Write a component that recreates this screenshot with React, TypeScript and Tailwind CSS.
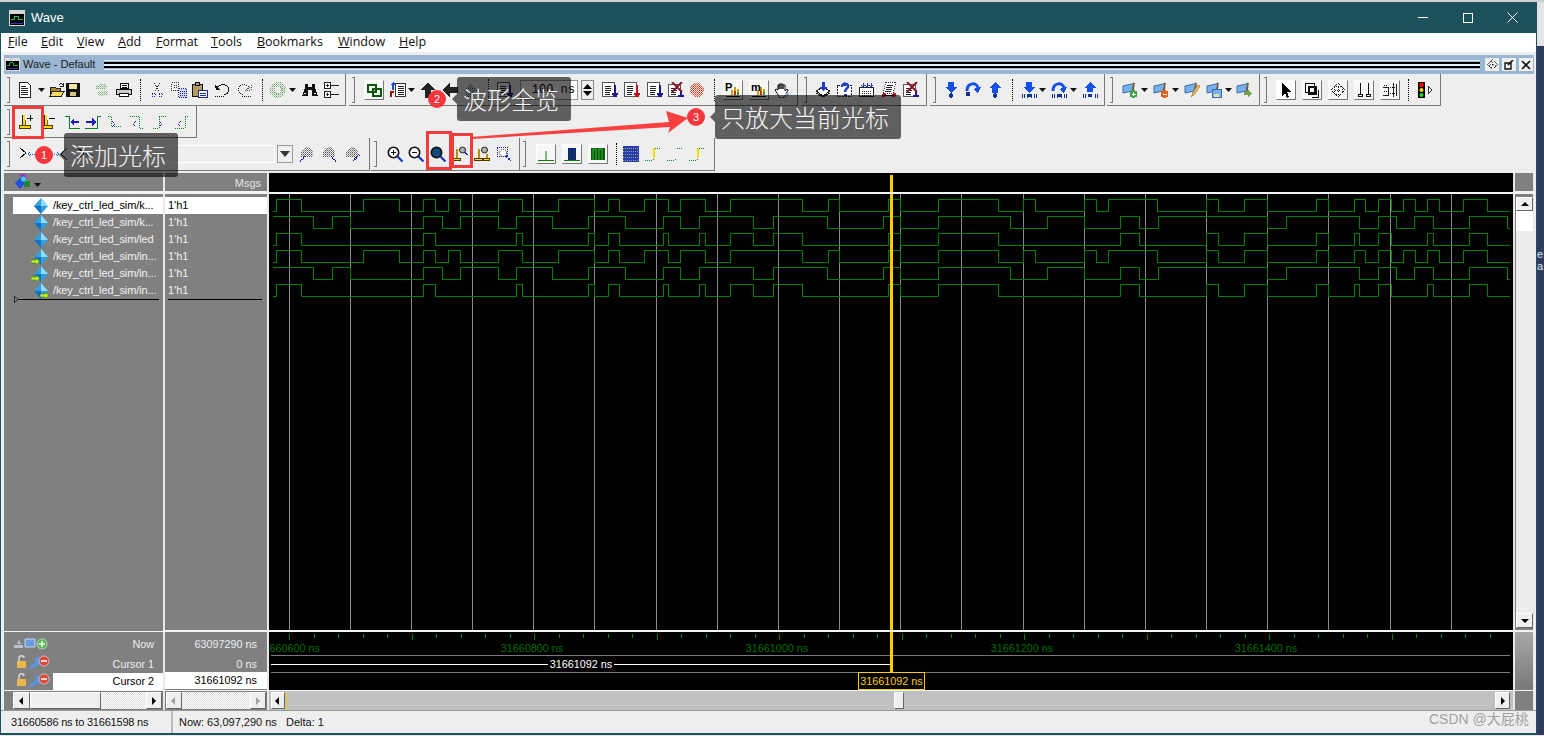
import type { ReactNode } from "react";

type IconProps = { c?: string };

const Ico = ({ c = "", children }: { c?: string; children: ReactNode }) => (
  <svg viewBox="0 0 16 16" fill="none" shapeRendering="crispEdges" className={`w-4 h-4 shrink-0 ${c}`}>
    {children}
  </svg>
);

// dither fills shared by the greyed out icons
const Patterns = () => (
  <svg className="absolute w-0 h-0">
    <defs>
      <pattern id="dithGrey" width="2" height="2" patternUnits="userSpaceOnUse">
        <rect width="1" height="1" fill="#555" />
        <rect x="1" y="1" width="1" height="1" fill="#999" />
      </pattern>
      <pattern id="dithGreen" width="2" height="2" patternUnits="userSpaceOnUse">
        <rect width="1" height="1" fill="#6fa56f" />
        <rect x="1" y="1" width="1" height="1" fill="#b5d0b5" />
      </pattern>
      <pattern id="dithRed" width="2" height="2" patternUnits="userSpaceOnUse">
        <rect width="1" height="1" fill="#d0301a" />
        <rect x="1" y="1" width="1" height="1" fill="#e86a50" />
      </pattern>
    </defs>
  </svg>
);

// main toolbar icons
const Doc = ({ c }: IconProps) => (
  <Ico c={c}>
    <path d="M2.5 .5h8l3 3v12h-11z" fill="#fff" stroke="#222" />
    <path d="M4 4h5M4 6h7M4 8h7M4 10h7M4 12h7" stroke="#222" />
  </Ico>
);
const Open = ({ c }: IconProps) => (
  <Ico c={c}>
    <path d="M1.5 5.5h5l1 1h4v8h-10z" fill="#b08a20" stroke="#222" />
    <path d="M3 9.5h12l-3 5H1z" fill="#ffd966" stroke="#222" />
    <path d="M10 3c1-2 3-2 4 0" stroke="#222" />
    <path d="M14 1v3h-3" stroke="#222" />
  </Ico>
);
const Save = ({ c }: IconProps) => (
  <Ico c={c}>
    <path d="M1.5 1.5h13v13h-13z" fill="#111" stroke="#111" />
    <path d="M4 2h8v5H4z" fill="#eee3a0" />
    <path d="M5 10h6v4H5z" fill="#d9c87a" />
  </Ico>
);
const Refresh = ({ c }: IconProps) => (
  <Ico c={c}>
    <path d="M1 7c1-6 10-7 13-2l-3 2H1zM15 9c-1 6-10 7-13 2l3-2h10z" fill="url(#dithGreen)" />
  </Ico>
);
const Print = ({ c }: IconProps) => (
  <Ico c={c}>
    <path d="M4.5 1.5h8v5h-8z" fill="#fff" stroke="#111" />
    <path d="M.5 7.5h15v5H.5z" fill="#ccc" stroke="#111" />
    <path d="M3.5 11.5h9v3h-9z" fill="#fff" stroke="#111" />
    <path d="M6 3h5M6 5h5" stroke="#111" />
  </Ico>
);
const Cut = ({ c }: IconProps) => (
  <Ico c={c}>
    <path d="M5 1l5 9M11 1l-5 9" stroke="#223" strokeDasharray="1 1" />
    <path d="M3 11h3v3H3zM10 11h3v3h-3z" stroke="#2222cc" strokeDasharray="1 1" />
  </Ico>
);
const Copy = ({ c }: IconProps) => (
  <Ico c={c}>
    <path d="M.5 .5h7v8h-7z" stroke="#333" strokeDasharray="1 1" />
    <path d="M7.5 6.5h8v9h-8z" fill="#c9d4f0" stroke="#2222aa" strokeDasharray="1 1" />
    <path d="M3 3h3M3 5h3M9 9h5M9 11h5M9 13h5" stroke="#334" strokeDasharray="1 1" />
  </Ico>
);
const Paste = ({ c }: IconProps) => (
  <Ico c={c}>
    <path d="M.5 2.5h10v12H.5z" fill="#b09a60" stroke="#111" />
    <path d="M3.5 .5h4v3h-4z" fill="#999" stroke="#111" />
    <path d="M6.5 8.5h9v7h-9z" fill="#fff" stroke="#1a2a9a" />
    <path d="M8 11h6M8 13h6" stroke="#1a2a9a" />
  </Ico>
);
const Undo = ({ c }: IconProps) => (
  <Ico c={c}>
    <path d="M2 6c3-5 11-4 12 1 0 3-2 5-5 6" stroke="#111" />
    <path d="M0 3l1 5h5z" fill="#111" />
    <path d="M0 14h10" stroke="#111" strokeDasharray="1 1" />
  </Ico>
);
const Redo = ({ c }: IconProps) => (
  <Ico c={c}>
    <path d="M14 6C11 1 3 2 2 7c0 3 2 5 5 6" stroke="#222" strokeDasharray="1 1" />
    <path d="M16 3l-1 5h-5z" stroke="#555" strokeDasharray="1 1" />
    <path d="M6 14h10" stroke="#222" strokeDasharray="1 1" />
  </Ico>
);
const Ring = ({ c }: IconProps) => (
  <Ico c={c}>
    <circle cx="8" cy="8" r="8" fill="url(#dithGreen)" />
    <circle cx="8" cy="8" r="3.5" fill="#eeeeee" stroke="#999" strokeDasharray="1 1" />
  </Ico>
);
const Bino = ({ c }: IconProps) => (
  <Ico c={c}>
    <path d="M3 2h3v3h4V2h3v4l3 8H10V8H6v6H0l3-8z" fill="#111" />
    <path d="M2 11h2M12 11h2" stroke="#fff" />
  </Ico>
);
const TreeIc = ({ c }: IconProps) => (
  <Ico c={c}>
    <path d="M.5 .5h6v6h-6zM.5 9.5h6v6h-6z" fill="#fff" stroke="#222" />
    <path d="M2 3.5h3M3.5 2v3M2 12.5h3M3.5 11v3M7 3.5h8M7 12.5h8" stroke="#222" />
  </Ico>
);
const Link = ({ c }: IconProps) => (
  <Ico c={c}>
    <path d="M1.5 2.5h8v7h-8z" stroke="#0a5a0a" strokeWidth="2" />
    <path d="M6.5 6.5h8v7h-8z" stroke="#0a5a0a" strokeWidth="2" />
  </Ico>
);
const Flip = ({ c }: IconProps) => (
  <Ico c={c}>
    <path d="M5.5 1.5h10v13h-10z" fill="#fff" stroke="#333" />
    <path d="M8 4h6M8 6h6M8 8h6M8 10h6M8 12h6" stroke="#222" />
    <path d="M3 8V3" stroke="#1a4ad0" strokeWidth="2" />
    <path d="M3 0l3 3H0z" fill="#1a4ad0" />
    <path d="M1 15v-5h3" stroke="#a01010" strokeWidth="2" />
  </Ico>
);
const Up = ({ c }: IconProps) => (
  <Ico c={c}>
    <path d="M8 0l7 8h-4v8H5V8H1z" fill="#222" />
  </Ico>
);
const Back = ({ c }: IconProps) => (
  <Ico c={c}>
    <path d="M0 8l8-7v4h8v6H8v4z" fill="#222" />
  </Ico>
);
const Hatch = ({ c }: IconProps) => (
  <Ico c={c}>
    <path d="M8 1l7 8h-3v6H4V9H1z" fill="url(#dithGrey)" />
  </Ico>
);
const Zoomer = ({ c, mark = "#1a1a8a" }: IconProps & { mark?: string }) => (
  <Ico c={c}>
    <path d="M.5 .5h12v14H.5z" fill="#fff" stroke="#555" />
    <path d="M3 4h6M3 6h6M3 8h6M3 10h5M3 12h5" stroke="#222" />
    <path d="M13 3v9M10 12h6M11 14h4" stroke={mark} strokeWidth="1.5" />
  </Ico>
);
const RedX = ({ c }: IconProps) => (
  <Ico c={c}>
    <path d="M.5 2.5h12v12H.5z" fill="#fff" stroke="#555" />
    <path d="M3 6h6M3 8h6M3 10h5M3 12h5" stroke="#222" />
    <path d="M13 8v5M10 14h6" stroke="#1a1a8a" strokeWidth="1.5" />
    <path d="M4 0l10 10M14 0L4 10" stroke="#8a1a2a" strokeWidth="2" shapeRendering="auto" />
  </Ico>
);
const RedDot = ({ c }: IconProps) => (
  <Ico c={c}>
    <circle cx="8" cy="8" r="7" fill="url(#dithRed)" />
  </Ico>
);
const Bars = ({ l }: { l: string }) => (
  <Ico>
    <path d="M1 14.5h14" stroke="#111" />
    <path d="M7 13V8M10 13V5M13 13V7" stroke="#d0a000" strokeWidth="2" />
    <path d="M10 13V9" stroke="#c03010" strokeWidth="2" />
    <path d="M13 13v-3" stroke="#2a9a2a" strokeWidth="2" />
    <text x="0" y="9" fontSize="11" fontWeight="700" fill="#000" fontFamily="Liberation Sans">
      {l}
    </text>
  </Ico>
);
const Hand = ({ c }: IconProps) => (
  <Ico c={c}>
    <path d="M4 8V3h1v4-5h2v5-5h2v5-4h2v6l2-2 1 1-3 6-2 2H6L3 11 1 8l1-1z" fill="#fff" stroke="#111" shapeRendering="auto" />
    <path d="M8 15l6-5 1 2-4 4z" fill="#9fb4c8" />
  </Ico>
);
const Layers = ({ c }: IconProps) => (
  <Ico c={c}>
    <path d="M1 9l7-4 7 4-7 5z" fill="#fff" stroke="#222" />
    <path d="M1 11l7 4 7-4" stroke="#222" />
    <path d="M8 0v6" stroke="#1a3ad0" strokeWidth="3" />
    <path d="M4 5h8l-4 4z" fill="#1a3ad0" />
  </Ico>
);
const Question = ({ c }: IconProps) => (
  <Ico c={c}>
    <path d="M.5 3.5h14v11H.5z" fill="#fff" stroke="#222" strokeDasharray="2 1" />
    <path d="M5 5c0-5 7-4 6 0-1 2-3 2-3 5" stroke="#1a3ad0" strokeWidth="2.5" shapeRendering="auto" />
    <path d="M7 12h3v2H7z" fill="#1a3ad0" />
  </Ico>
);
const ListDown = ({ c }: IconProps) => (
  <Ico c={c}>
    <path d="M.5 5.5h14v9H.5z" fill="#fff" stroke="#222" />
    <path d="M3 9h9M3 11h9M3 13h9" stroke="#333" strokeDasharray="1 1" />
    <path d="M4 1v3M8 1v3M12 1v3M2 3l2 2 2-2M6 3l2 2 2-2M10 3l2 2 2-2" stroke="#1a3ad0" />
  </Ico>
);
const Scroll = ({ c }: IconProps) => (
  <Ico c={c}>
    <path d="M5 .5h10l-3 11H2z" fill="#fff" stroke="#333" strokeDasharray="1 1" />
    <path d="M6 3h6M5 5h6M5 7h6M4 9h6" stroke="#223" />
    <circle cx="3" cy="13" r="2" fill="#c01020" />
    <circle cx="13" cy="13" r="2" fill="#c01020" />
    <path d="M3 13h10" stroke="#111" />
  </Ico>
);
const Down2 = ({ c }: IconProps) => (
  <Ico c={c}>
    <path d="M5 0h6v5h3l-6 6-6-6h3z" fill="#1450e8" />
    <circle cx="8" cy="13.5" r="2.2" fill="#10309a" />
  </Ico>
);
const Over = ({ c }: IconProps) => (
  <Ico c={c}>
    <path d="M2 9c0-9 10-9 11-3" stroke="#1450e8" strokeWidth="3" shapeRendering="auto" />
    <path d="M16 5l-3 6-5-4z" fill="#1450e8" />
    <circle cx="3" cy="12" r="2.5" fill="#10309a" />
  </Ico>
);
const Up2 = ({ c }: IconProps) => (
  <Ico c={c}>
    <path d="M8 0l6 6h-3v5H5V6H2z" fill="#1450e8" />
    <circle cx="8" cy="13.5" r="2.2" fill="#10309a" />
  </Ico>
);
const BarsDown = ({ c, over = false }: IconProps & { over?: boolean }) => (
  <Ico c={c}>
    {over ? (
      <>
        <path d="M2 9c0-9 10-9 11-3" stroke="#1450e8" strokeWidth="3" shapeRendering="auto" />
        <path d="M16 5l-3 6-5-4z" fill="#1450e8" />
      </>
    ) : (
      <path d="M5 0h6v5h3l-6 6-6-6h3z" fill="#1450e8" />
    )}
    <path d="M1 12v4M3 12v4M6 12v4M10 12v4M13 12v4M15 12v4" stroke="#10309a" />
    <circle cx="8" cy="13.5" r="2" fill="#10309a" />
  </Ico>
);
const BarsUp = ({ c }: IconProps) => (
  <Ico c={c}>
    <path d="M8 0l6 6h-3v4H5V6H2z" fill="#1450e8" />
    <path d="M1 12v4M3 12v4M13 12v4M15 12v4" stroke="#10309a" />
    <circle cx="8" cy="13.5" r="2" fill="#10309a" />
  </Ico>
);
const Flag = ({ c, badge }: IconProps & { badge: ReactNode }) => (
  <Ico c={c}>
    <path d="M1 4l9-2 2-1-2 8-9 2z" fill="#7ab0e8" stroke="#3a6ab0" shapeRendering="auto" />
    <path d="M12 1l-1 9" stroke="#7a5a20" strokeWidth="1.5" shapeRendering="auto" />
    {badge}
  </Ico>
);
const Arrow = ({ c }: IconProps) => (
  <Ico c={c}>
    <path d="M4 1l9 9H9l2 5-2 1-2-5-3 3z" fill="#000" />
  </Ico>
);
const Squares = ({ c }: IconProps) => (
  <Ico c={c}>
    <path d="M1.5 1.5h9v9h-9z" stroke="#111" />
    <path d="M5 5h7v7H5z" stroke="#111" strokeWidth="2" />
    <path d="M14 8v7H8" stroke="#111" />
  </Ico>
);
const Pan = ({ c }: IconProps) => (
  <Ico c={c}>
    <path d="M8 1l3 3H5zM8 15l3-3H5zM1 8l3-3v6zM15 8l-3-3v6zM5 8h6M8 5v6" stroke="#222" strokeDasharray="1 1" />
  </Ico>
);
const TwoPins = ({ c }: IconProps) => (
  <Ico c={c}>
    <path d="M4 1v11M12 1v11" stroke="#111" />
    <path d="M2 12.5h4v2H2zM10 12.5h4v2h-4z" stroke="#111" />
  </Ico>
);
const Columns = ({ c }: IconProps) => (
  <Ico c={c}>
    <path d="M1 5h5v8H1M11 1v14M14 2v12" stroke="#222" />
    <path d="M2 3h3M2 9h3M8 5h5M8 11h5" stroke="#111" strokeDasharray="1 1" />
  </Ico>
);
const Lights = ({ c }: IconProps) => (
  <Ico c={c}>
    <path d="M1 0h7v16H1z" fill="#000" />
    <circle cx="4.5" cy="3" r="2.4" fill="#f00000" shapeRendering="auto" />
    <circle cx="4.5" cy="8" r="2" fill="#f0e000" shapeRendering="auto" />
    <circle cx="4.5" cy="13" r="2" fill="#20e020" shapeRendering="auto" />
    <path d="M11 4l4 4-4 4z" fill="#fff" stroke="#333" />
  </Ico>
);

// cursor icons
const CursorBase = () => (
  <>
    <path d="M1.5 11.5h11v3h-11z" fill="#ffd800" stroke="#4a3a00" />
    <path d="M4.5 1v10" stroke="#222" />
    <path d="M5.5 1v10M6.5 1v10" stroke="#ffd800" />
    <path d="M7.5 6v5" stroke="#8a7000" />
  </>
);
const CurAdd = ({ c }: IconProps) => (
  <Ico c={c}>
    <CursorBase />
    <path d="M9 4h6M12 1v6" stroke="#111" />
  </Ico>
);
const CurDel = ({ c }: IconProps) => (
  <Ico c={c}>
    <CursorBase />
    <path d="M9 4h6" stroke="#111" />
  </Ico>
);
const EdgeLeft = ({ c }: IconProps) => (
  <Ico c={c}>
    <path d="M1 2h4v12h11" stroke="#0a7a2a" />
    <path d="M6 8l4-4v3h5v2h-5v3z" fill="#1818c8" />
  </Ico>
);
const EdgeRight = ({ c }: IconProps) => (
  <Ico c={c}>
    <path d="M16 2h-4v12H0" stroke="#0a7a2a" />
    <path d="M11 8L7 4v3H1v2h6v3z" fill="#1818c8" />
  </Ico>
);
const DotEdge = ({ c, d, m }: IconProps & { d: string; m: string }) => (
  <Ico c={c}>
    <path d={d} stroke="#0a8a2a" strokeDasharray="1 1" />
    <path d={m} stroke="#1818c8" strokeDasharray="1 1" />
  </Ico>
);

// zoom icons
const Lens = ({ c, mark, fill = "#fff" }: IconProps & { mark?: string; fill?: string }) => (
  <Ico c={c}>
    <circle cx="6.5" cy="6.5" r="5.2" fill={fill} stroke="#111" strokeWidth="1.6" shapeRendering="auto" />
    <path d="M10.5 10.5l5 5" stroke="#1a30c0" strokeWidth="2.2" shapeRendering="auto" />
    {mark && <path d={mark} stroke="#111" strokeWidth="1.6" />}
  </Ico>
);
const CurLens = ({ c, two = false }: IconProps & { two?: boolean }) => (
  <Ico c={c}>
    <path d="M.5 12.5h8v2h-8z" fill="#ffd800" stroke="#4a3a00" />
    {two && <path d="M9.5 12.5h6v2h-6z" fill="#ffd800" stroke="#4a3a00" />}
    <path d="M4.5 3v9" stroke="#b89000" strokeWidth="2" />
    {two && <path d="M12.5 8v4" stroke="#b89000" strokeWidth="2" />}
    <circle cx="10.5" cy="4" r="3" fill="#b0b0b0" stroke="#222" shapeRendering="auto" />
    {!two && <path d="M13 6l2 3" stroke="#1a30c0" strokeWidth="1.5" />}
  </Ico>
);
const DotLens = ({ c }: IconProps) => (
  <Ico c={c}>
    <path d="M1 1h10v9H1z" stroke="#1818c8" strokeDasharray="1 1" />
    <circle cx="7" cy="7" r="3.5" fill="#fff" stroke="#222" strokeDasharray="1 1" shapeRendering="auto" />
    <path d="M10 10l5 5" stroke="#1a30c0" strokeWidth="2" strokeDasharray="2 1" />
  </Ico>
);
const HatchBlue = ({ c, mark }: IconProps & { mark: string }) => (
  <Ico c={c}>
    <path d="M2 11V6l4-5h4l4 5v5z" fill="url(#dithGrey)" />
    <path d={mark} stroke="#1818c8" strokeDasharray="1 1" strokeWidth="2" />
  </Ico>
);
const Snip = ({ c }: IconProps) => (
  <Ico c={c}>
    <path d="M1 2l6 5-6 5" stroke="#111" />
    <path d="M9 8h7M11 6l-2 2 2 2" stroke="#1a60e0" strokeDasharray="1 1" />
  </Ico>
);
const Snip2 = ({ c }: IconProps) => (
  <Ico c={c}>
    <path d="M15 2L9 8l6 6" stroke="#111" />
    <path d="M0 8h7M5 6l2 2-2 2" stroke="#1a60e0" strokeDasharray="1 1" />
  </Ico>
);
const Checker = ({ c }: IconProps) => (
  <Ico c={c}>
    <path d="M0 0h16v16H0z" fill="#2a3ab0" />
    <path d="M0 2h16M0 5h16M0 8h16M0 11h16M0 14h16" stroke="#7ab07a" strokeDasharray="1 1" />
  </Ico>
);
const StepDots = ({ c, mid, d }: IconProps & { mid: string; d: string }) => (
  <Ico c={c}>
    <path d={d} stroke="#0a8a2a" strokeDasharray="1 1" />
    <path d="M9 2v10" stroke={mid} strokeWidth="2" />
  </Ico>
);

const Dd = ({ c = "" }: IconProps) => (
  <svg viewBox="0 0 7 4" className={`w-[7px] h-1 shrink-0 ${c}`}>
    <path d="M0 0h7L3.5 4z" fill="#111" />
  </svg>
);
const Sep = ({ c = "" }: IconProps) => <div className={`w-px h-[22px] shrink-0 border-l border-dotted border-black ${c}`} />;
const Btn = ({ c = "", children }: { c?: string; children: ReactNode }) => (
  <div className={`w-5 h-5 shrink-0 flex items-center justify-center bg-[#f7f7f7] border border-t-white border-l-white border-r-[#777] border-b-[#777] ${c}`}>
    {children}
  </div>
);
const Bar = ({ c = "", children }: { c?: string; children: ReactNode }) => (
  <div className={`flex items-center shrink-0 h-full border-r border-b border-[#777] ${c}`}>
    <div className="w-[3px] h-[26px] ml-[3px] mr-[4px] shrink-0 border-r border-y border-[#777]" />
    {children}
  </div>
);

const menus = [
  { k: "F", r: "ile", w: "w-[33px]" },
  { k: "E", r: "dit", w: "w-[36px]" },
  { k: "V", r: "iew", w: "w-[41px]" },
  { k: "A", r: "dd", w: "w-[38px]" },
  { k: "F", r: "ormat", w: "w-[55px]" },
  { k: "T", r: "ools", w: "w-[46px]" },
  { k: "B", r: "ookmarks", w: "w-[81px]" },
  { k: "W", r: "indow", w: "w-[61px]" },
  { k: "H", r: "elp", w: "w-[40px]" },
];

const signals = [
  { name: "/key_ctrl_led_sim/k...", kind: 0 },
  { name: "/key_ctrl_led_sim/k...", kind: 0 },
  { name: "/key_ctrl_led_sim/led", kind: 0 },
  { name: "/key_ctrl_led_sim/in...", kind: 1 },
  { name: "/key_ctrl_led_sim/in...", kind: 1 },
  { name: "/key_ctrl_led_sim/in...", kind: 2 },
];

const edgesA = [276, 301, 363, 399, 423, 435, 448, 460, 498, 522, 558, 594, 608, 619, 644, 668, 680, 705, 730, 802, 828, 839, 888, 900, 938, 998, 1023, 1035, 1084, 1096, 1108, 1157, 1206, 1218, 1244, 1267, 1316, 1328, 1354, 1365, 1378, 1391, 1403, 1415, 1427, 1439, 1463, 1487];
const edgesB = [313, 332, 350, 423, 442, 460, 498, 516, 552, 588, 625, 663, 680, 699, 753, 773, 827, 883, 900, 938, 1010, 1047, 1084, 1120, 1139, 1158, 1267, 1286, 1359, 1378, 1396, 1414, 1433, 1469, 1507];
const edgesC = [276, 301, 423, 435, 516, 522, 588, 594, 608, 619, 663, 668, 699, 705, 730, 753, 773, 802, 888, 900, 938, 998, 1120, 1139, 1206, 1218, 1244, 1267, 1316, 1328, 1354, 1359, 1378, 1391, 1427, 1433, 1469, 1487];
const traces = [
  { e: edgesA, high: false },
  { e: edgesB, high: true },
  { e: edgesC, high: false },
  { e: edgesA, high: false },
  { e: edgesB, high: true },
  { e: edgesC, high: false },
];
const gridX = [289, 350, 411, 472, 533, 594, 656, 717, 778, 839, 900, 961, 1023, 1084, 1145, 1206, 1267, 1328, 1390, 1451];

const WAVE_X = 269;

function tracePath(edges: number[], startHigh: boolean, row: number) {
  const hi = 5.5 + row * 17;
  const lo = 17.5 + row * 17;
  let y = startHigh ? hi : lo;
  let d = `M${273 - WAVE_X} ${y}`;
  for (const x of edges) {
    d += `H${x - WAVE_X + 0.5}`;
    y = y === hi ? lo : hi;
    d += `V${y}`;
  }
  return d + `H${1510 - WAVE_X}`;
}

const tickX = Array.from({ length: 50 }, (_, i) => i);

function SignalIcon({ kind }: { kind: number }) {
  return (
    <svg viewBox="0 0 18 16" className="w-[18px] h-4 shrink-0 ml-[18px]">
      <path d="M10 0l7 8-7 8-7-8z" fill="#2f9fe0" />
      <path d="M10 0l7 8h-7z" fill="#8fdcf8" />
      <path d="M3 8l7 8V8z" fill="#1a6fc0" />
      {kind === 1 && <path d="M0 11h5V9l4 3.5L5 16v-2H0z" fill="#b8f020" stroke="#2a6a10" strokeWidth=".5" />}
      {kind === 2 && <path d="M9 11h5V9l4 3.5-4 3.5v-2H9z" fill="#b8f020" stroke="#2a6a10" strokeWidth=".5" />}
    </svg>
  );
}

const Lock = ({ c = "" }: IconProps) => (
  <svg viewBox="0 0 36 14" className={`w-9 h-3.5 shrink-0 ${c}`}>
    <path d="M2 6h9v7H2z" fill="#e8b84a" />
    <path d="M4 6V3c0-3 5-3 5 0" stroke="#ddd" strokeWidth="1.4" fill="none" />
    <path d="M14 13l6-6c-1-3 2-6 5-5l-2 3 2 2 3-2c0 4-3 6-6 5l-6 5z" fill="#5a94e0" />
    <circle cx="29" cy="6" r="5" fill="#e0453a" stroke="#eee" strokeWidth=".6" />
    <path d="M26 6h6" stroke="#fff" strokeWidth="1.6" />
  </svg>
);

function ScrollArrow({ dir, off = false }: { dir: "l" | "r" | "u" | "d"; off?: boolean }) {
  const d = { l: "M6 1v8L2 5z", r: "M3 1v8l4-4z", u: "M1 7h8L5 3z", d: "M1 3h8L5 7z" }[dir];
  return (
    <svg viewBox="0 0 10 10" className="w-2.5 h-2.5">
      <path d={d} fill={off ? "#a0a0a0" : "#000"} />
    </svg>
  );
}
const ScrollBtn = ({ c = "", children }: { c?: string; children: ReactNode }) => (
  <div className={`flex items-center justify-center shrink-0 bg-[#efefef] border border-t-white border-l-white border-r-[#666] border-b-[#666] ${c}`}>
    {children}
  </div>
);

const tagClass = "absolute h-[44px] rounded-[3px] bg-black/60 text-[#f4f4f4] text-[24px] font-light leading-[44px] px-[6px] font-['Noto_Sans_CJK_SC',sans-serif] whitespace-nowrap";
const dotClass = "absolute w-[18px] h-[18px] rounded-full bg-[#f5363c] text-white text-[11px] leading-[18px] text-center";
const notchClass = "absolute -left-[5px] top-[17px] w-0 h-0 border-y-[5px] border-r-[5px] border-y-transparent border-r-black/60";

export default function App() {
  return (
    <div className="relative w-[1544px] h-[736px] overflow-hidden bg-[#d9d9d9] font-['Liberation_Sans',sans-serif] flex flex-col">
      <Patterns />
      <div className="h-[2px] shrink-0 bg-[#cfcfcf]" />
      <div className="flex flex-1 min-h-0">
        <div className="w-[1537px] shrink-0 flex flex-col bg-[#1d525d] px-px">
          {/* title bar */}
          <div className="h-[31px] shrink-0 flex items-center text-white text-[13px] pl-[8px]">
            <svg viewBox="0 0 16 16" shapeRendering="crispEdges" className="w-4 h-4 shrink-0">
              <path d="M0 0h16v16H0z" fill="#d8d8d8" />
              <path d="M1 4h14v11H1z" fill="#000" />
              <path d="M2 9h3V6h4v3h5" stroke="#20c040" fill="none" />
              <path d="M2 13h12" stroke="#4030c0" />
            </svg>
            <span className="ml-[6px]">Wave</span>
            <div className="ml-auto flex items-center">
              <div className="w-[10px] h-px bg-white mr-[35px]" />
              <div className="w-[10px] h-[10px] border border-white mr-[34px]" />
              <svg viewBox="0 0 11 11" className="w-[11px] h-[11px] mr-[18px]">
                <path d="M.5.5l10 10M10.5.5l-10 10" stroke="#fff" />
              </svg>
            </div>
          </div>

          {/* menu bar */}
          <div className="h-[19px] shrink-0 bg-white flex items-center pl-[7px] text-[12.5px] text-[#111] font-['Open_Sans',sans-serif]">
            {menus.map((m, i) => (
              <div key={i} className={`shrink-0 ${m.w}`}>
                <span className="underline">{m.k}</span>
                {m.r}
              </div>
            ))}
          </div>

          <div className="flex-1 min-h-0 flex flex-col bg-[#eeeeee] pt-[3px] pl-[3px] pr-[2px]">
            {/* MDI title */}
            <div className="h-[19px] shrink-0 flex items-center bg-[#9ab6d2] text-[11px] text-[#1a1a1a]">
              <svg viewBox="0 0 16 16" shapeRendering="crispEdges" className="w-[15px] h-[15px] ml-px shrink-0">
                <path d="M0 1h16v14H0z" fill="#d8d8d8" />
                <path d="M1 4h14v10H1z" fill="#000" />
                <path d="M2 9h3V6h4v3h5" stroke="#20c040" fill="none" />
                <path d="M2 12h12" stroke="#4030c0" />
              </svg>
              <span className="ml-[3px] w-[81px] shrink-0 whitespace-nowrap">Wave - Default</span>
              <div className="flex-1 flex flex-col justify-center h-[10px] border-y border-[#dff0ff]">
                <div className="h-[2px] bg-black" />
                <div className="h-[2px] bg-[#dff0ff]" />
                <div className="h-[2px] bg-black" />
              </div>
              <div className="flex items-center pl-[5px] pr-px gap-[3px] shrink-0">
                <div className="w-[14px] h-[13px] bg-[#f0f0f0] flex items-center justify-center">
                  <Pan c="w-[11px] h-[11px]" />
                </div>
                <div className="w-[14px] h-[13px] bg-[#f0f0f0] flex items-center justify-center">
                  <svg viewBox="0 0 10 10" className="w-2.5 h-2.5">
                    <path d="M1 3h6v6H1z" stroke="#111" strokeWidth="1.4" fill="none" />
                    <path d="M9 0L4 5" stroke="#111" strokeWidth="1.6" />
                  </svg>
                </div>
                <div className="w-[14px] h-[13px] bg-[#f0f0f0] flex items-center justify-center">
                  <svg viewBox="0 0 10 10" className="w-2.5 h-2.5">
                    <path d="M1 1l8 8M9 1L1 9" stroke="#111" strokeWidth="1.6" />
                  </svg>
                </div>
              </div>
            </div>

            {/* toolbar row 1 */}
            <div className="h-[32px] shrink-0 flex">
              <Bar c="w-[342px]">
                <Doc c="ml-[3px]" />
                <Dd c="ml-[5px]" />
                <Open c="ml-[4px]" />
                <Save />
                <Refresh c="ml-[13px]" />
                <Print c="ml-[6px]" />
                <Sep c="ml-[8px]" />
                <Cut c="ml-[8px]" />
                <Copy c="ml-[6px]" />
                <Paste c="ml-[5px]" />
                <Undo c="ml-[7px]" />
                <Redo c="ml-[5px]" />
                <Sep c="ml-[10px]" />
                <Ring c="ml-[7px]" />
                <Dd c="ml-[3px] w-[5px]" />
                <Bino c="ml-[6px]" />
                <TreeIc c="ml-[6px]" />
              </Bar>
              <Bar c="w-[449px] ml-[3px]">
                <Btn c="ml-[5px]">
                  <Link />
                </Btn>
                <Flip c="ml-[6px]" />
                <Dd c="ml-[2px]" />
                <Up c="ml-[5px]" />
                <Back c="ml-[6px]" />
                <Hatch c="ml-[4px]" />
                <Sep c="ml-[10px]" />
                <Zoomer c="ml-[8px]" />
                <div className="ml-[7px] w-[58px] h-[20px] shrink-0 bg-white border border-[#999] text-[12px] leading-[18px] text-right pr-[2px] font-['Liberation_Mono',monospace] whitespace-nowrap">
                  100 ns
                </div>
                <div className="ml-[3px] w-[13px] h-[20px] shrink-0 flex flex-col bg-[#efefef] border border-[#888] items-center justify-center gap-[2px]">
                  <svg viewBox="0 0 9 5" className="w-[9px] h-[5px]">
                    <path d="M0 5h9L4.5 0z" fill="#000" />
                  </svg>
                  <svg viewBox="0 0 9 5" className="w-[9px] h-[5px]">
                    <path d="M0 0h9L4.5 5z" fill="#000" />
                  </svg>
                </div>
                <Zoomer c="ml-[8px]" />
                <Zoomer c="ml-[6px]" mark="#c01020" />
                <Zoomer c="ml-[7px]" />
                <RedX c="ml-[5px]" />
                <RedDot c="ml-[5px]" />
                <Sep c="ml-[9px]" />
                <Btn c="ml-[8px]">
                  <Bars l="P" />
                </Btn>
                <Btn c="ml-[6px]">
                  <Bars l="m" />
                </Btn>
                <Hand c="ml-[5px]" />
              </Bar>
              <Bar c="w-[126px] ml-[3px]">
                <Layers c="ml-[4px]" />
                <Question c="ml-[6px]" />
                <ListDown c="ml-[6px]" />
                <Scroll c="ml-[6px]" />
                <RedX c="ml-[6px]" />
              </Bar>
              <Bar c="w-[175px] ml-[3px]">
                <Down2 c="ml-[3px]" />
                <Over c="ml-[6px]" />
                <Up2 c="ml-[6px]" />
                <Sep c="ml-[9px]" />
                <BarsDown c="ml-[8px]" />
                <Dd c="ml-[2px]" />
                <BarsDown c="ml-[5px]" over />
                <Dd c="ml-[3px]" />
                <BarsUp c="ml-[5px]" />
              </Bar>
              <Bar c="w-[153px] ml-[2px]">
                <Flag c="ml-[5px]" badge={<><circle cx="11.5" cy="12" r="3.8" fill="#3fa03f" /><path d="M9.5 12h4M11.5 10v4" stroke="#fff" /></>} />
                <Dd c="ml-[3px]" />
                <Flag c="ml-[5px]" badge={<><circle cx="11.5" cy="12" r="3.8" fill="#e0601a" /><path d="M9.5 12h4" stroke="#fff" /></>} />
                <Dd c="ml-[3px]" />
                <Flag c="ml-[5px]" badge={<path d="M7 15l2-5 5-7 2 1-5 8z" fill="#e8b860" stroke="#a07020" strokeWidth=".6" />} />
                <Flag c="ml-[6px]" badge={<><path d="M6 7h9v8H6z" fill="#7ab0e8" stroke="#3a6ab0" /><path d="M8 12h5v3H8z" fill="#d8e8a0" /></>} />
                <Dd c="ml-[3px]" />
                <Flag c="ml-[4px]" badge={<path d="M8 10h4V7l4 4.5-4 4.5v-3H8z" fill="#6aa84a" />} />
              </Bar>
              <Bar c="w-[180px] ml-px">
                <Btn c="ml-[5px] bg-white">
                  <Arrow />
                </Btn>
                <Btn c="ml-[6px]">
                  <Squares />
                </Btn>
                <Btn c="ml-[6px]">
                  <Pan />
                </Btn>
                <Btn c="ml-[6px]">
                  <TwoPins />
                </Btn>
                <Btn c="ml-[6px]">
                  <Columns />
                </Btn>
                <Sep c="ml-[8px]" />
                <Lights c="ml-[8px]" />
              </Bar>
            </div>

            {/* toolbar row 2 */}
            <div className="h-[32px] shrink-0 flex">
              <Bar c="w-[193px]">
                <CurAdd c="ml-[4px]" />
                <CurDel c="ml-[6px]" />
                <EdgeLeft c="ml-[8px]" />
                <EdgeRight c="ml-[5px]" />
                <DotEdge c="ml-[6px]" d="M1 2h3v10h11" m="M5 7l3 3-3 3" />
                <DotEdge c="ml-[6px]" d="M1 2h9v12h5" m="M7 7l-3 3 3 3" />
                <DotEdge c="ml-[6px]" d="M15 2H8v12H1" m="M8 7l3 3-3 3" />
                <DotEdge c="ml-[6px]" d="M15 2h-3v12H1" m="M8 7l-3 3 3 3" />
              </Bar>
            </div>

            {/* toolbar row 3 */}
            <div className="h-[33px] shrink-0 flex">
              <Bar c="w-[366px]">
                <Snip c="ml-[5px]" />
                <Snip2 c="ml-[17px]" />
                <Snip c="ml-[9px]" />
                <div className="ml-[20px] w-[162px] h-[18px] shrink-0 border border-white bg-[#eeeeee]" />
                <div className="ml-[2px] w-[16px] h-[18px] shrink-0 flex items-center justify-center bg-[#efefef] border border-[#999]">
                  <svg viewBox="0 0 10 6" className="w-2.5 h-1.5">
                    <path d="M0 0h10L5 6z" fill="#333" />
                  </svg>
                </div>
                <HatchBlue c="ml-[6px]" mark="M1 15l5-4" />
                <HatchBlue c="ml-[6px]" mark="M15 15l-5-4" />
                <HatchBlue c="ml-[7px]" mark="M9 15l6-6" />
              </Bar>
              <Bar c="w-[149px] ml-px">
                <Lens c="ml-[6px]" mark="M4 6.5h5M6.5 4v5" />
                <Lens c="ml-[5px]" mark="M4 6.5h5" />
                <Lens c="ml-[6px]" fill="#0f4a7a" />
                <CurLens c="ml-[6px]" />
                <CurLens c="ml-[6px]" two />
                <DotLens c="ml-[6px]" />
              </Bar>
              <Bar c="w-[195px]">
                <Btn c="ml-[6px]">
                  <svg viewBox="0 0 16 16" className="w-4 h-4">
                    <path d="M0 14.5h16M8 5v9" stroke="#0a7a0a" />
                  </svg>
                </Btn>
                <Btn c="ml-[6px]">
                  <svg viewBox="0 0 16 16" className="w-4 h-4">
                    <path d="M4 2h8v12H4z" fill="#10208a" />
                    <path d="M0 14.5h16" stroke="#0a7a0a" />
                    <path d="M6 3v11M10 3v11" stroke="#0a5a0a" />
                  </svg>
                </Btn>
                <Btn c="ml-[6px]">
                  <svg viewBox="0 0 16 16" className="w-4 h-4">
                    <path d="M1 2h14v12H1z" fill="#0a5a0a" />
                    <path d="M3 14V3h3v11M9 14V3h3v11" stroke="#30b030" fill="none" />
                  </svg>
                </Btn>
                <Sep c="ml-[8px]" />
                <Checker c="ml-[6px]" />
                <StepDots c="ml-[6px]" mid="#f0e000" d="M0 14h8V2h8" />
                <StepDots c="ml-[6px]" mid="#eeeeee" d="M0 14h8V2h8" />
                <StepDots c="ml-[6px]" mid="#f0e000" d="M0 14h8V2h8" />
              </Bar>
            </div>

            <div className="h-[2px] shrink-0" />

            {/* wave header */}
            <div className="h-[18px] shrink-0 grid grid-cols-[159px_102px_1244px_18px] gap-x-[2px] bg-[#e8e8e8] text-[11px] text-[#e4e4e4]">
              <div className="bg-[#808080] flex items-center pl-[10px]">
                <svg viewBox="0 0 18 16" className="w-[18px] h-4 shrink-0">
                  <path d="M5 0h5l4 5H8z" fill="#a030c8" />
                  <path d="M6 4l5 5-5 6-5-6z" fill="#2050e0" />
                  <path d="M10 7h6v6h-6z" fill="#1a8a3a" />
                  <circle cx="9.5" cy="5" r="2.5" fill="#30d0e8" />
                </svg>
                <Dd c="ml-[2px] mt-[6px] w-[5px]" />
              </div>
              <div className="bg-[#808080] flex items-center justify-end pr-[6px] pt-[2px]">Msgs</div>
              <div className="bg-black relative">
                <div className="absolute left-[621px] top-[2px] bottom-0 w-[3px] bg-[#ffcc00]" />
              </div>
              <div className="bg-[#808080]" />
            </div>
            <div className="h-[3px] shrink-0 bg-[#f4f4f4]" />

            {/* wave body */}
            <div className="flex-1 min-h-0 grid grid-cols-[159px_102px_1244px_18px] gap-x-[2px] bg-[#e8e8e8]">
              <div className="bg-[#808080] pt-[3px] text-[11px] tracking-[-0.1px] text-[#f2f2f2] relative">
                {signals.map((s, i) => (
                  <div key={i} className={`h-[17px] flex items-center ml-[9px] whitespace-nowrap ${i === 0 ? "bg-white text-black" : ""}`}>
                    <SignalIcon kind={s.kind} />
                    <span className="ml-[4px]">{s.name}</span>
                  </div>
                ))}
                <div className="ml-[11px] w-[144px] h-px bg-black relative">
                  <svg viewBox="0 0 5 7" className="absolute -left-px -top-[3px] w-[5px] h-[7px]">
                    <path d="M.5.5l4 3-4 3z" fill="#808080" stroke="#000" strokeWidth=".7" />
                  </svg>
                </div>
              </div>
              <div className="bg-[#808080] pt-[3px] text-[11px] text-[#f2f2f2]">
                {signals.map((_, i) => (
                  <div key={i} className={`h-[17px] flex items-center pl-[3px] ${i === 0 ? "bg-white text-black" : ""}`}>
                    1'h1
                  </div>
                ))}
                <div className="ml-[3px] w-[94px] h-px bg-black" />
              </div>
              <svg width="1244" height="437" className="block bg-black" shapeRendering="crispEdges">
                {gridX.map((x) => (
                  <path key={x} d={`M${x - WAVE_X + 0.5} 0V437`} stroke="#8a8a8a" />
                ))}
                {traces.map((t, i) => (
                  <path key={i} d={tracePath(t.e, t.high, i)} stroke="#008000" fill="none" />
                ))}
                <rect x="621" y="0" width="3" height="437" fill="#ffcc00" />
              </svg>
              <div className="bg-[#808080] flex flex-col items-stretch py-[3px] pl-px">
                <div className="flex-1 flex flex-col bg-[#ededed]">
                  <ScrollBtn c="h-[14px]">
                    <ScrollArrow dir="u" />
                  </ScrollBtn>
                  <div className="h-[20px] bg-white shrink-0" />
                  <div className="flex-1" />
                  <ScrollBtn c="h-[15px]">
                    <ScrollArrow dir="d" />
                  </ScrollBtn>
                </div>
              </div>
            </div>
            <div className="h-[2px] shrink-0 bg-[#f4f4f4]" />

            {/* cursors */}
            <div className="h-[58px] shrink-0 grid grid-cols-[159px_102px_1244px_18px] gap-x-[2px] bg-[#e8e8e8]">
              <div className="bg-[#808080] flex flex-col text-[10.8px] text-[#eeeeee]">
                <div className="h-[24px] flex items-center justify-end pr-[9px] relative">
                  <svg viewBox="0 0 36 12" className="absolute left-[9px] top-[6px] w-9 h-3">
                    <path d="M1 10h9V7H1zM4 6l2-4 2 4" fill="#b8c4d0" />
                    <path d="M12 1h10v8h-10z" fill="#6a9ae0" stroke="#dce8f8" strokeWidth=".8" />
                    <circle cx="29" cy="6" r="5" fill="#58b858" stroke="#dfe" strokeWidth=".6" />
                    <path d="M26 6h6M29 3v6" stroke="#fff" strokeWidth="1.4" />
                  </svg>
                  Now
                </div>
                <div className="h-[16px] flex items-center justify-end pr-[9px] relative">
                  <Lock c="absolute left-[11px] top-[-1px]" />
                  Cursor 1
                </div>
                <div className="h-[18px] flex items-center justify-end relative">
                  <Lock c="absolute left-[11px] top-[1px]" />
                  <div className="w-[110px] h-[17px] bg-white text-black flex items-center justify-end pr-[9px]">Cursor 2</div>
                </div>
              </div>
              <div className="bg-[#808080] flex flex-col text-[10.8px] text-[#eeeeee]">
                <div className="h-[24px] flex items-center justify-end pr-[10px]">63097290 ns</div>
                <div className="h-[16px] flex items-center justify-end pr-[10px]">0 ns</div>
                <div className="h-[17px] flex items-center justify-end pr-[10px] bg-white text-black">31661092 ns</div>
              </div>
              <svg width="1244" height="58" className="block bg-black font-['Liberation_Sans',sans-serif]" shapeRendering="crispEdges">
                {tickX.map((i) => {
                  const x = Math.round(20 + i * 24.5) + 0.5;
                  return <path key={i} d={`M${x} 2V${i % 5 === 0 ? 8 : 6}`} stroke="#008000" />;
                })}
                <g fill="#007000" fontSize="10.8" textAnchor="middle">
                  <text x="51" y="20" textAnchor="end">31660600 ns</text>
                  <text x="263" y="20">31660800 ns</text>
                  <text x="508" y="20">31661000 ns</text>
                  <text x="753" y="20">31661200 ns</text>
                  <text x="997" y="20">31661400 ns</text>
                </g>
                <path d="M2 23.5H1241M2 40.5H1241" stroke="#7a7a7a" />
                <path d="M2 32.5H621" stroke="#ffffff" />
                <rect x="279" y="26" width="66" height="13" fill="#000" />
                <text x="312" y="36" fill="#fff" fontSize="10.8" textAnchor="middle">31661092 ns</text>
                <rect x="621" y="0" width="3" height="40" fill="#ffcc00" />
                <rect x="589.5" y="40.5" width="66" height="17" fill="#000" stroke="#ffcc00" />
                <text x="622.5" y="53" fill="#ffcc00" fontSize="10.8" textAnchor="middle">31661092 ns</text>
              </svg>
              <div className="bg-gradient-to-b from-[#a8a8a8] to-[#787878]" />
            </div>

            <div className="h-px shrink-0 bg-[#f4f4f4]" />

            {/* horizontal scrollbars */}
            <div className="h-[19px] shrink-0 grid grid-cols-[159px_102px_1244px_18px] gap-x-[2px] bg-[#e8e8e8]">
              <div className="bg-[#808080] flex pl-[9px] pr-px py-px">
                <ScrollBtn c="w-[17px]">
                  <ScrollArrow dir="l" />
                </ScrollBtn>
                <ScrollBtn c="w-[71px]">{null}</ScrollBtn>
                <div className="flex-1 bg-[repeating-conic-gradient(#ffffff_0_25%,#dddddd_0_50%)] bg-[length:2px_2px]" />
                <ScrollBtn c="w-[16px]">
                  <ScrollArrow dir="r" />
                </ScrollBtn>
              </div>
              <div className="bg-[#808080] flex pl-px pr-px py-px">
                <ScrollBtn c="w-[16px]">
                  <ScrollArrow dir="l" off />
                </ScrollBtn>
                <div className="flex-1 bg-[repeating-conic-gradient(#ffffff_0_25%,#dddddd_0_50%)] bg-[length:2px_2px]" />
                <ScrollBtn c="w-[16px]">
                  <ScrollArrow dir="r" off />
                </ScrollBtn>
              </div>
              <div className="bg-[#c0c0c0] flex items-stretch pl-[2px] py-px pr-[3px]">
                <ScrollBtn c="w-[14px]">
                  <ScrollArrow dir="l" />
                </ScrollBtn>
                <div className="w-px bg-[#ffcc00] ml-px" />
                <ScrollBtn c="w-[10px] ml-[607px]">{null}</ScrollBtn>
                <div className="flex-1" />
                <ScrollBtn c="w-[15px]">
                  <ScrollArrow dir="r" />
                </ScrollBtn>
              </div>
              <div className="bg-[#808080]" />
            </div>

            {/* status bar */}
            <div className="h-[23px] shrink-0 flex items-center text-[11px] text-[#111] border-t border-[#999] -ml-[3px] -mr-[2px]">
              <div className="w-[172px] shrink-0 h-full flex items-center pl-[10px] border-r-2 border-[#bbb] tracking-[-0.2px]">
                31660586 ns to 31661598 ns
              </div>
              <div className="pl-[6px] whitespace-pre">Now: 63,097,290 ns   Delta: 1</div>
            </div>
          </div>
          <div className="h-[2px] shrink-0" />
        </div>

        <div className="flex-1 bg-[#2f3c5e] relative text-[11px] text-[#dfe6f0] leading-[12px] pt-[246px]">
          <div className="absolute left-0 right-0 top-0 h-[44px] bg-[#e4e4e4]" />
          <div>e</div>
          <div>a</div>
        </div>
      </div>
      <div className="h-px shrink-0 bg-[#e8e8e8]" />

      {/* annotations */}
      <div className="absolute left-[12px] top-[106px] w-[32px] h-[33px] border-[3px] border-[#f23b3b]" />
      <div className="absolute left-[426px] top-[131px] w-[26px] h-[39px] border-[3px] border-[#f23b3b]" />
      <div className="absolute left-[451px] top-[133px] w-[22px] h-[35px] border-[3px] border-[#f23b3b]" />
      <svg viewBox="0 0 230 40" className="absolute left-[465px] top-[105px] w-[230px] h-[40px]">
        <path d="M6 32L204 17l-3-11 22 7-20 15 2-6L7 34z" fill="#fb4040" />
      </svg>

      <div className={`${tagClass} left-[64px] top-[133px] w-[114px]`}>
        <div className={notchClass} />
        添加光标
      </div>
      <div className={`${dotClass} left-[35px] top-[146px]`}>1</div>

      <div className={`${tagClass} left-[457px] top-[77px] w-[114px]`}>
        <div className={notchClass} />
        波形全览
      </div>
      <div className={`${dotClass} left-[428px] top-[90px]`}>2</div>

      <div className={`${tagClass} left-[715px] top-[95px] w-[186px]`}>
        <div className={notchClass} />
        只放大当前光标
      </div>
      <div className={`${dotClass} left-[687px] top-[108px]`}>3</div>

      <div className="absolute left-[1429px] top-[709px] text-[14px] text-[#8a8a8a]/80 font-['Liberation_Sans','Noto_Sans_CJK_SC',sans-serif] whitespace-nowrap">
        CSDN @大屁桃
      </div>
    </div>
  );
}
